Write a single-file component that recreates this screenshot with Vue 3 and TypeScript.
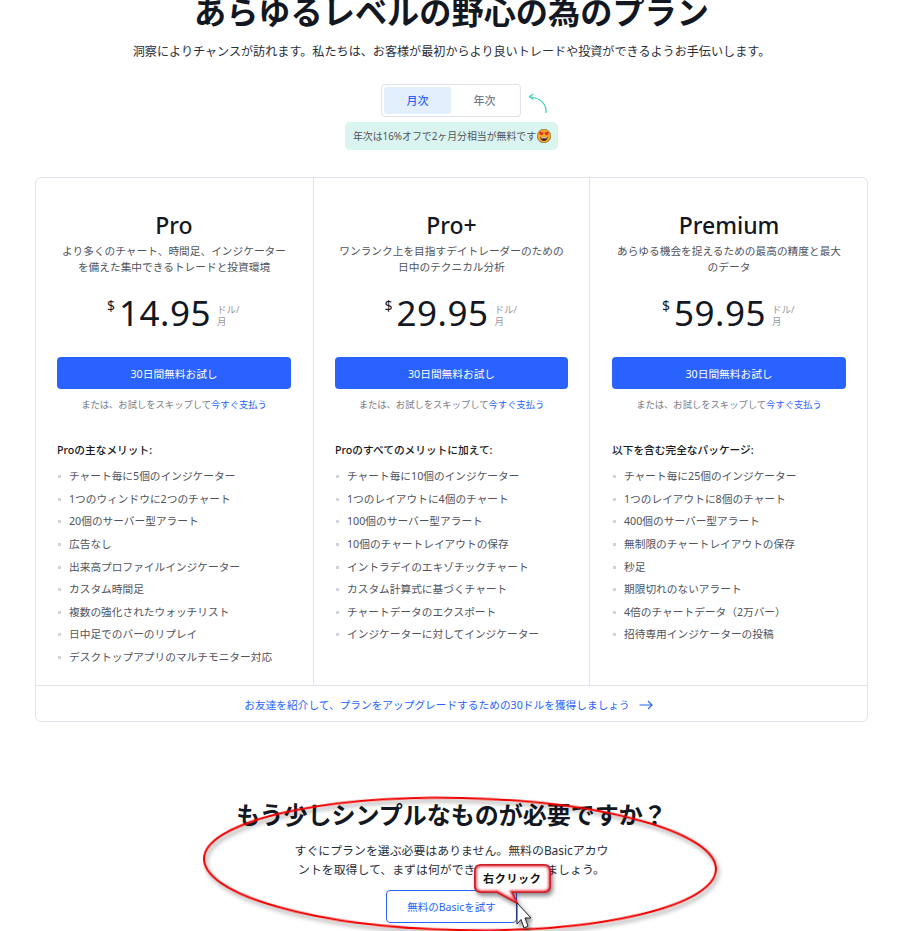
<script setup lang="ts">
interface Plan {
  name: string;
  desc: string[];
  price: string;
  lead: string;
  features: string[];
}

const plans: Plan[] = [
  {
    name: 'Pro',
    desc: ['より多くのチャート、時間足、インジケーター', 'を備えた集中できるトレードと投資環境'],
    price: '14.95',
    lead: 'Proの主なメリット:',
    features: [
      'チャート毎に5個のインジケーター',
      '1つのウィンドウに2つのチャート',
      '20個のサーバー型アラート',
      '広告なし',
      '出来高プロファイルインジケーター',
      'カスタム時間足',
      '複数の強化されたウォッチリスト',
      '日中足でのバーのリプレイ',
      'デスクトップアプリのマルチモニター対応',
    ],
  },
  {
    name: 'Pro+',
    desc: ['ワンランク上を目指すデイトレーダーのための', '日中のテクニカル分析'],
    price: '29.95',
    lead: 'Proのすべてのメリットに加えて:',
    features: [
      'チャート毎に10個のインジケーター',
      '1つのレイアウトに4個のチャート',
      '100個のサーバー型アラート',
      '10個のチャートレイアウトの保存',
      'イントラデイのエキゾチックチャート',
      'カスタム計算式に基づくチャート',
      'チャートデータのエクスポート',
      'インジケーターに対してインジケーター',
    ],
  },
  {
    name: 'Premium',
    desc: ['あらゆる機会を捉えるための最高の精度と最大', 'のデータ'],
    price: '59.95',
    lead: '以下を含む完全なパッケージ:',
    features: [
      'チャート毎に25個のインジケーター',
      '1つのレイアウトに8個のチャート',
      '400個のサーバー型アラート',
      '無制限のチャートレイアウトの保存',
      '秒足',
      '期限切れのないアラート',
      '4倍のチャートデータ（2万バー）',
      '招待専用インジケーターの投稿',
    ],
  },
];

const calloutPath =
  'M481 865H544Q550 865 550 871V886Q550 892 544 892H512L517 903L497 892H481Q475 892 475 886V871Q475 865 481 865Z';
</script>

<template>
  <div class="page">
    <h1 class="title">あらゆるレベルの野心の為のプラン</h1>
    <p class="subtitle">洞察によりチャンスが訪れます。私たちは、お客様が最初からより良いトレードや投資ができるようお手伝いします。</p>

    <div class="toggle-row">
      <div class="toggle">
        <span class="tab active">月次</span>
        <span class="tab">年次</span>
        <svg class="hint-arrow" width="22" height="24" viewBox="0 0 22 24" fill="none">
          <path d="M19 23 C20 14 13 7.500 3 7" stroke="#3ccfb8" stroke-width="1.200" />
          <path d="M6 4 L2.500 6.800 L6.500 9.500" stroke="#3ccfb8" stroke-width="1.200" />
        </svg>
      </div>
    </div>

    <div class="note-row">
      <div class="note">
        年次は16%オフで2ヶ月分相当が無料です
        <svg class="emoji" width="14" height="14" viewBox="0 0 14 14">
          <circle cx="7" cy="7" r="6.800" fill="#f5a623" stroke="#5a3a10" stroke-width="0.500" />
          <path d="M4.200 3.200c-1-.9-2.400.2-1.800 1.400L4 6.200l2-.9c1-.8.2-2.400-1.100-2z" fill="#e0262e" />
          <path d="M9.800 3.200c1-.9 2.400.2 1.800 1.400L10 6.200l-2-.9c-1-.8-.2-2.400 1.100-2z" fill="#e0262e" />
          <path d="M3.400 8h7.200c0 2.400-1.600 4-3.600 4s-3.600-1.600-3.600-4z" fill="#4a2410" />
          <path d="M4.200 8.300h5.600v1H4.200z" fill="#fff" />
        </svg>
      </div>
    </div>

    <section class="plans">
      <div class="columns">
        <div v-for="plan in plans" :key="plan.name" class="plan">
          <h2 class="plan-name">{{ plan.name }}</h2>
          <p class="plan-desc">
            <span v-for="line in plan.desc" :key="line">{{ line }}</span>
          </p>
          <div class="price">
            <span class="currency">$</span>
            <span class="amount">{{ plan.price }}</span>
            <span class="unit">ドル/<br />月</span>
          </div>
          <button class="trial">30日間無料お試し</button>
          <p class="skip">または、お試しをスキップして<a class="link">今すぐ支払う</a></p>
          <h3 class="lead">{{ plan.lead }}</h3>
          <ul class="features">
            <li v-for="item in plan.features" :key="item">{{ item }}</li>
          </ul>
        </div>
      </div>
      <div class="refer">
        <a class="link">お友達を紹介して、プランをアップグレードするための30ドルを獲得しましょう</a>
        <svg width="14" height="10" viewBox="0 0 14 10" fill="none">
          <path d="M0.500 5H13M9 1l4 4-4 4" stroke="#2962ff" stroke-width="1.100" />
        </svg>
      </div>
    </section>

    <section class="basic">
      <h2 class="basic-title">もう少しシンプルなものが必要ですか？</h2>
      <p class="basic-text">すぐにプランを選ぶ必要はありません。無料のBasicアカウントを取得して、まずは何ができるか試してみましょう。</p>
      <button class="basic-btn">無料のBasicを試す</button>
    </section>

    <svg class="annotation" width="913" height="931" viewBox="0 0 913 931" fill="none">
      <defs>
        <filter id="soft" x="-10%" y="-20%" width="120%" height="140%">
          <feDropShadow dx="2" dy="3" stdDeviation="2" flood-color="#000" flood-opacity="0.450" />
        </filter>
        <filter id="blur" x="-10%" y="-10%" width="120%" height="120%">
          <feGaussianBlur stdDeviation="1.200" />
        </filter>
        <clipPath id="inside">
          <path :d="calloutPath" />
        </clipPath>
      </defs>
      <ellipse cx="460" cy="864" rx="256" ry="66" transform="rotate(1.200 460 864)" stroke="#f00000" stroke-width="2" filter="url(#soft)" />
      <path :d="calloutPath" fill="#fff" stroke="#d0202a" stroke-width="2" filter="url(#soft)" />
      <g clip-path="url(#inside)">
        <path :d="calloutPath" stroke="#f0606a" stroke-width="4" filter="url(#blur)" />
      </g>
      <path :d="calloutPath" stroke="#c8202a" stroke-width="1.200" />
      <path
        d="M517 903V924L521 919.500L524 928L528 926L525 918L531 918Z"
        fill="#fff"
        stroke="#222"
        stroke-width="1"
        filter="url(#soft)"
      />
    </svg>
    <span class="callout-text">右クリック</span>
  </div>
</template>

<style>
html,
body {
  margin: 0;
  background: #fff;
}
</style>

<style scoped>
.page {
  position: relative;
  width: 903px;
  height: 931px;
  overflow: hidden;
  font-family: "Noto Sans", "Noto Sans CJK JP", sans-serif;
  color: #131722;
  text-align: center;
}

.title { margin: -10px 0 0; font-size: 32.200px; line-height: 44px; font-weight: 700; }
.subtitle { margin: 9px 0 0; font-size: 12.100px; line-height: 18px; color: #2a2e39; }

.toggle-row { display: flex; justify-content: center; margin-top: 23px; padding-right: 1px; }
.toggle { position: relative; display: flex; width: 134px; height: 27px; padding: 2px; border: 1px solid #e0e3eb; border-radius: 4px; box-sizing: content-box; }
.tab { flex: 0 0 67px; font-size: 11px; font-weight: 500; line-height: 27px; color: #787b86; border-radius: 3px; }
.tab.active { color: #2962ff; background: #e3effd; }
.hint-arrow { position: absolute; left: 145px; top: 5px; }

.note-row { display: flex; justify-content: center; margin-top: 5px; }
.note { display: flex; align-items: center; gap: 1px; height: 28px; padding: 0 7px 0 8px; border-radius: 5px; background: #daf5f0; font-size: 9.900px; color: #50535e; }

.plans { width: 833px; margin: 27px 0 0 35px; border: 1px solid #e0e3eb; border-radius: 6px; box-sizing: border-box; height: 545px; display: flex; flex-direction: column; }
.columns { display: grid; grid-template-columns: 278px 276px 1fr; height: 507px; border-bottom: 1px solid #e0e3eb; }
.plan { padding: 35px 21px 0; border-right: 1px solid #e0e3eb; }
.plan:first-child { padding-right: 22px; }
.plan:last-child { padding-left: 22px; border-right: none; }
.plan-name { margin: 0; font-size: 23px; line-height: 24px; font-weight: 500; }
.plan-desc { margin: 6px 0 0; font-size: 10.700px; line-height: 16px; color: #50535e; }
.plan-desc span { display: block; }

.price { display: flex; justify-content: center; align-items: flex-start; height: 40px; margin-top: 19px; }
.currency { font-size: 14px; line-height: 16px; margin: 4px 4px 0 0; }
.amount { font-size: 35px; line-height: 38px; letter-spacing: 0.500px; }
.unit { margin: 10px 0 0 6px; font-size: 9.500px; line-height: 12px; color: #9598a1; text-align: left; width: 24px; }

.trial { display: block; width: 100%; height: 32px; margin: 23px 0 0; border: none; border-radius: 4px; background: #2962ff; color: #fff; font: 400 10.700px/32px "Noto Sans", "Noto Sans CJK JP", sans-serif; }
.skip { margin: 8px 0 0; font-size: 9.300px; line-height: 16px; color: #787b86; }
.link { color: #2962ff; }

.lead { margin: 29px 0 0; font-size: 10.700px; line-height: 16px; font-weight: 500; text-align: left; }
.features { margin: 7px 0 0; padding: 0; list-style: none; text-align: left; }
.features li { position: relative; height: 22.650px; padding-left: 12px; font-size: 10.700px; line-height: 22.650px; color: #50535e; }
.features li::before { content: ""; position: absolute; left: 1px; top: 10px; width: 3px; height: 3px; background: #d1d4dc; }

.refer { flex: 1; display: flex; align-items: center; justify-content: center; gap: 9px; padding: 2px 6px 0 0; font-size: 10.700px; }

.basic { margin: 78px 0 0; }
.basic-title { margin: 0; font-size: 24px; line-height: 30px; font-weight: 700; }
.basic-text { width: 320px; margin: 11px auto 0; font-size: 11.900px; line-height: 19px; color: #2a2e39; }
.basic-btn { width: 131px; height: 33px; margin-top: 11px; background: #fff; border: 1px solid #2962ff; border-radius: 4px; color: #2962ff; font: 400 10.500px/31px "Noto Sans", "Noto Sans CJK JP", sans-serif; }

.annotation { position: absolute; left: 0; top: 0; pointer-events: none; }
.callout-text { position: absolute; left: 483px; top: 871px; font-size: 11px; line-height: 16px; font-weight: 700; letter-spacing: 0.700px; color: #111; }
</style>
